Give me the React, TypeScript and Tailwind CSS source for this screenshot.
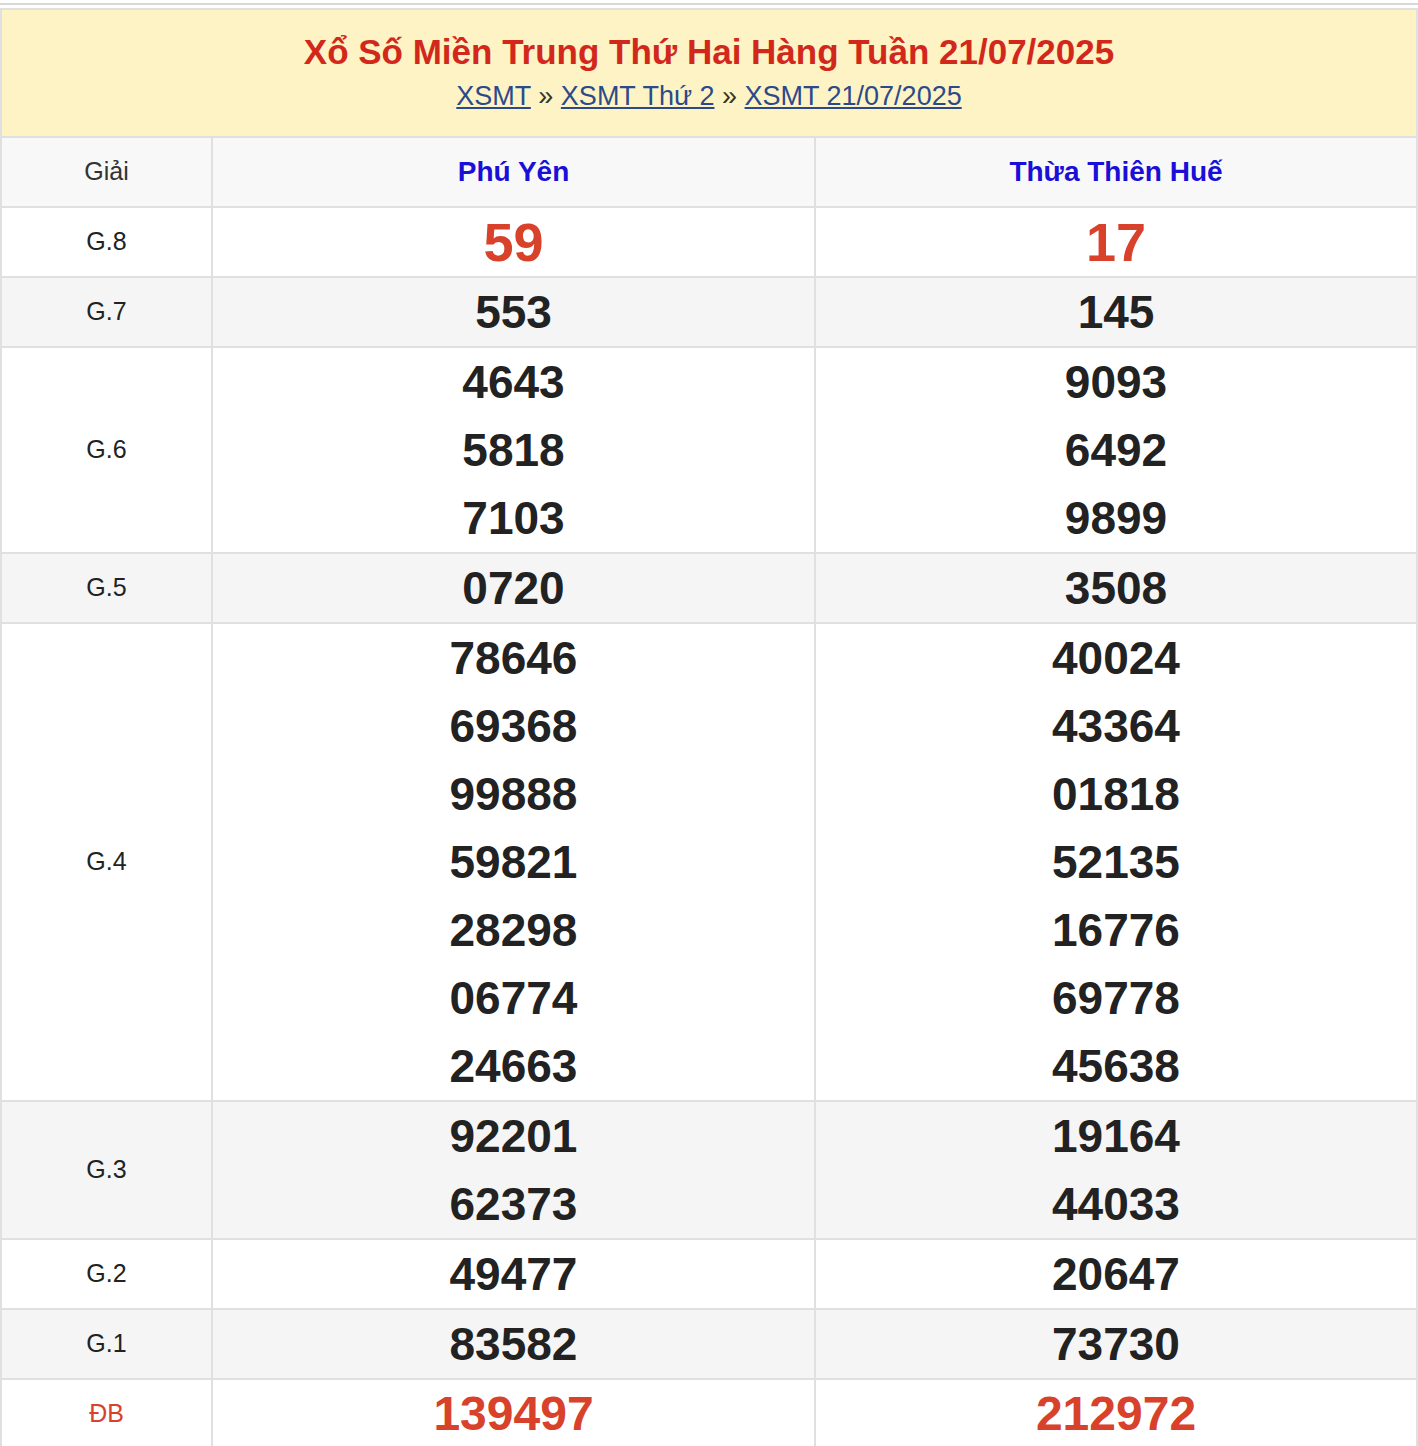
import React from "react";

const rows: { label: string; a: string[]; b: string[]; bg: string; kind?: string }[] = [
  { label: "G.8", a: ["59"], b: ["17"], bg: "bg-white", kind: "g8" },
  { label: "G.7", a: ["553"], b: ["145"], bg: "bg-[#f5f5f5]" },
  { label: "G.6", a: ["4643", "5818", "7103"], b: ["9093", "6492", "9899"], bg: "bg-white" },
  { label: "G.5", a: ["0720"], b: ["3508"], bg: "bg-[#f5f5f5]" },
  { label: "G.4", a: ["78646", "69368", "99888", "59821", "28298", "06774", "24663"], b: ["40024", "43364", "01818", "52135", "16776", "69778", "45638"], bg: "bg-white" },
  { label: "G.3", a: ["92201", "62373"], b: ["19164", "44033"], bg: "bg-[#f5f5f5]" },
  { label: "G.2", a: ["49477"], b: ["20647"], bg: "bg-white" },
  { label: "G.1", a: ["83582"], b: ["73730"], bg: "bg-[#f5f5f5]" },
  { label: "ĐB", a: ["139497"], b: ["212972"], bg: "bg-white", kind: "db" },
];

function Nums({ list, kind }: { list: string[]; kind?: string }) {
  const cls =
    kind === "g8"
      ? "text-[54px] text-[#d8412a]"
      : kind === "db"
      ? "text-[48px] text-[#d8412a]"
      : "text-[46px] text-[#222]";
  return (
    <td className="border-2 border-[#e0e0e0] p-0 text-center align-middle">
      {list.map((n, i) => (
        <div key={i} className={`h-[68px] leading-[68px] font-bold ${cls}`}>{n}</div>
      ))}
    </td>
  );
}

export default function App() {
  return (
    <div className="w-[1418px] bg-white pt-[3px]" style={{ fontFamily: '"Liberation Sans", Arial, sans-serif' }}>
      <div className="border-t-2 border-[#d8d8d8] h-[5px]" />
      <div className="border-2 border-b-0 border-[#e0e0e0] bg-[#fdf3c4] h-[128px] flex flex-col items-center pt-[20px]">
        <h1 className="text-[35px] font-bold text-[#d2281c] leading-[44px]">Xổ Số Miền Trung Thứ Hai Hàng Tuần 21/07/2025</h1>
        <div className="text-[27px] leading-[40px] mt-[2px] text-[#333]">
          <a className="underline text-[#2c4a8a]">XSMT</a> » <a className="underline text-[#2c4a8a]">XSMT Thứ 2</a> » <a className="underline text-[#2c4a8a]">XSMT 21/07/2025</a>
        </div>
      </div>
      <table className="w-[1418px] border-collapse table-fixed">
        <colgroup>
          <col className="w-[211px]" />
          <col className="w-[603px]" />
          <col />
        </colgroup>
        <tbody>
          <tr className="bg-[#f8f8f8] h-[70px]">
            <td className="border-2 border-[#e0e0e0] text-center text-[25px] text-[#333]">Giải</td>
            <td className="border-2 border-[#e0e0e0] text-center text-[28px] font-bold text-[#1a0fd6]">Phú Yên</td>
            <td className="border-2 border-[#e0e0e0] text-center text-[28px] font-bold text-[#1a0fd6]">Thừa Thiên Huế</td>
          </tr>
          {rows.map((r) => (
            <tr key={r.label} className={r.bg}>
              <td className={`border-2 border-[#e0e0e0] text-center text-[25px] ${r.kind === "db" ? "text-[#d8412a]" : "text-[#222]"}`}>{r.label}</td>
              <Nums list={r.a} kind={r.kind} />
              <Nums list={r.b} kind={r.kind} />
            </tr>
          ))}
        </tbody>
      </table>
    </div>
  );
}
